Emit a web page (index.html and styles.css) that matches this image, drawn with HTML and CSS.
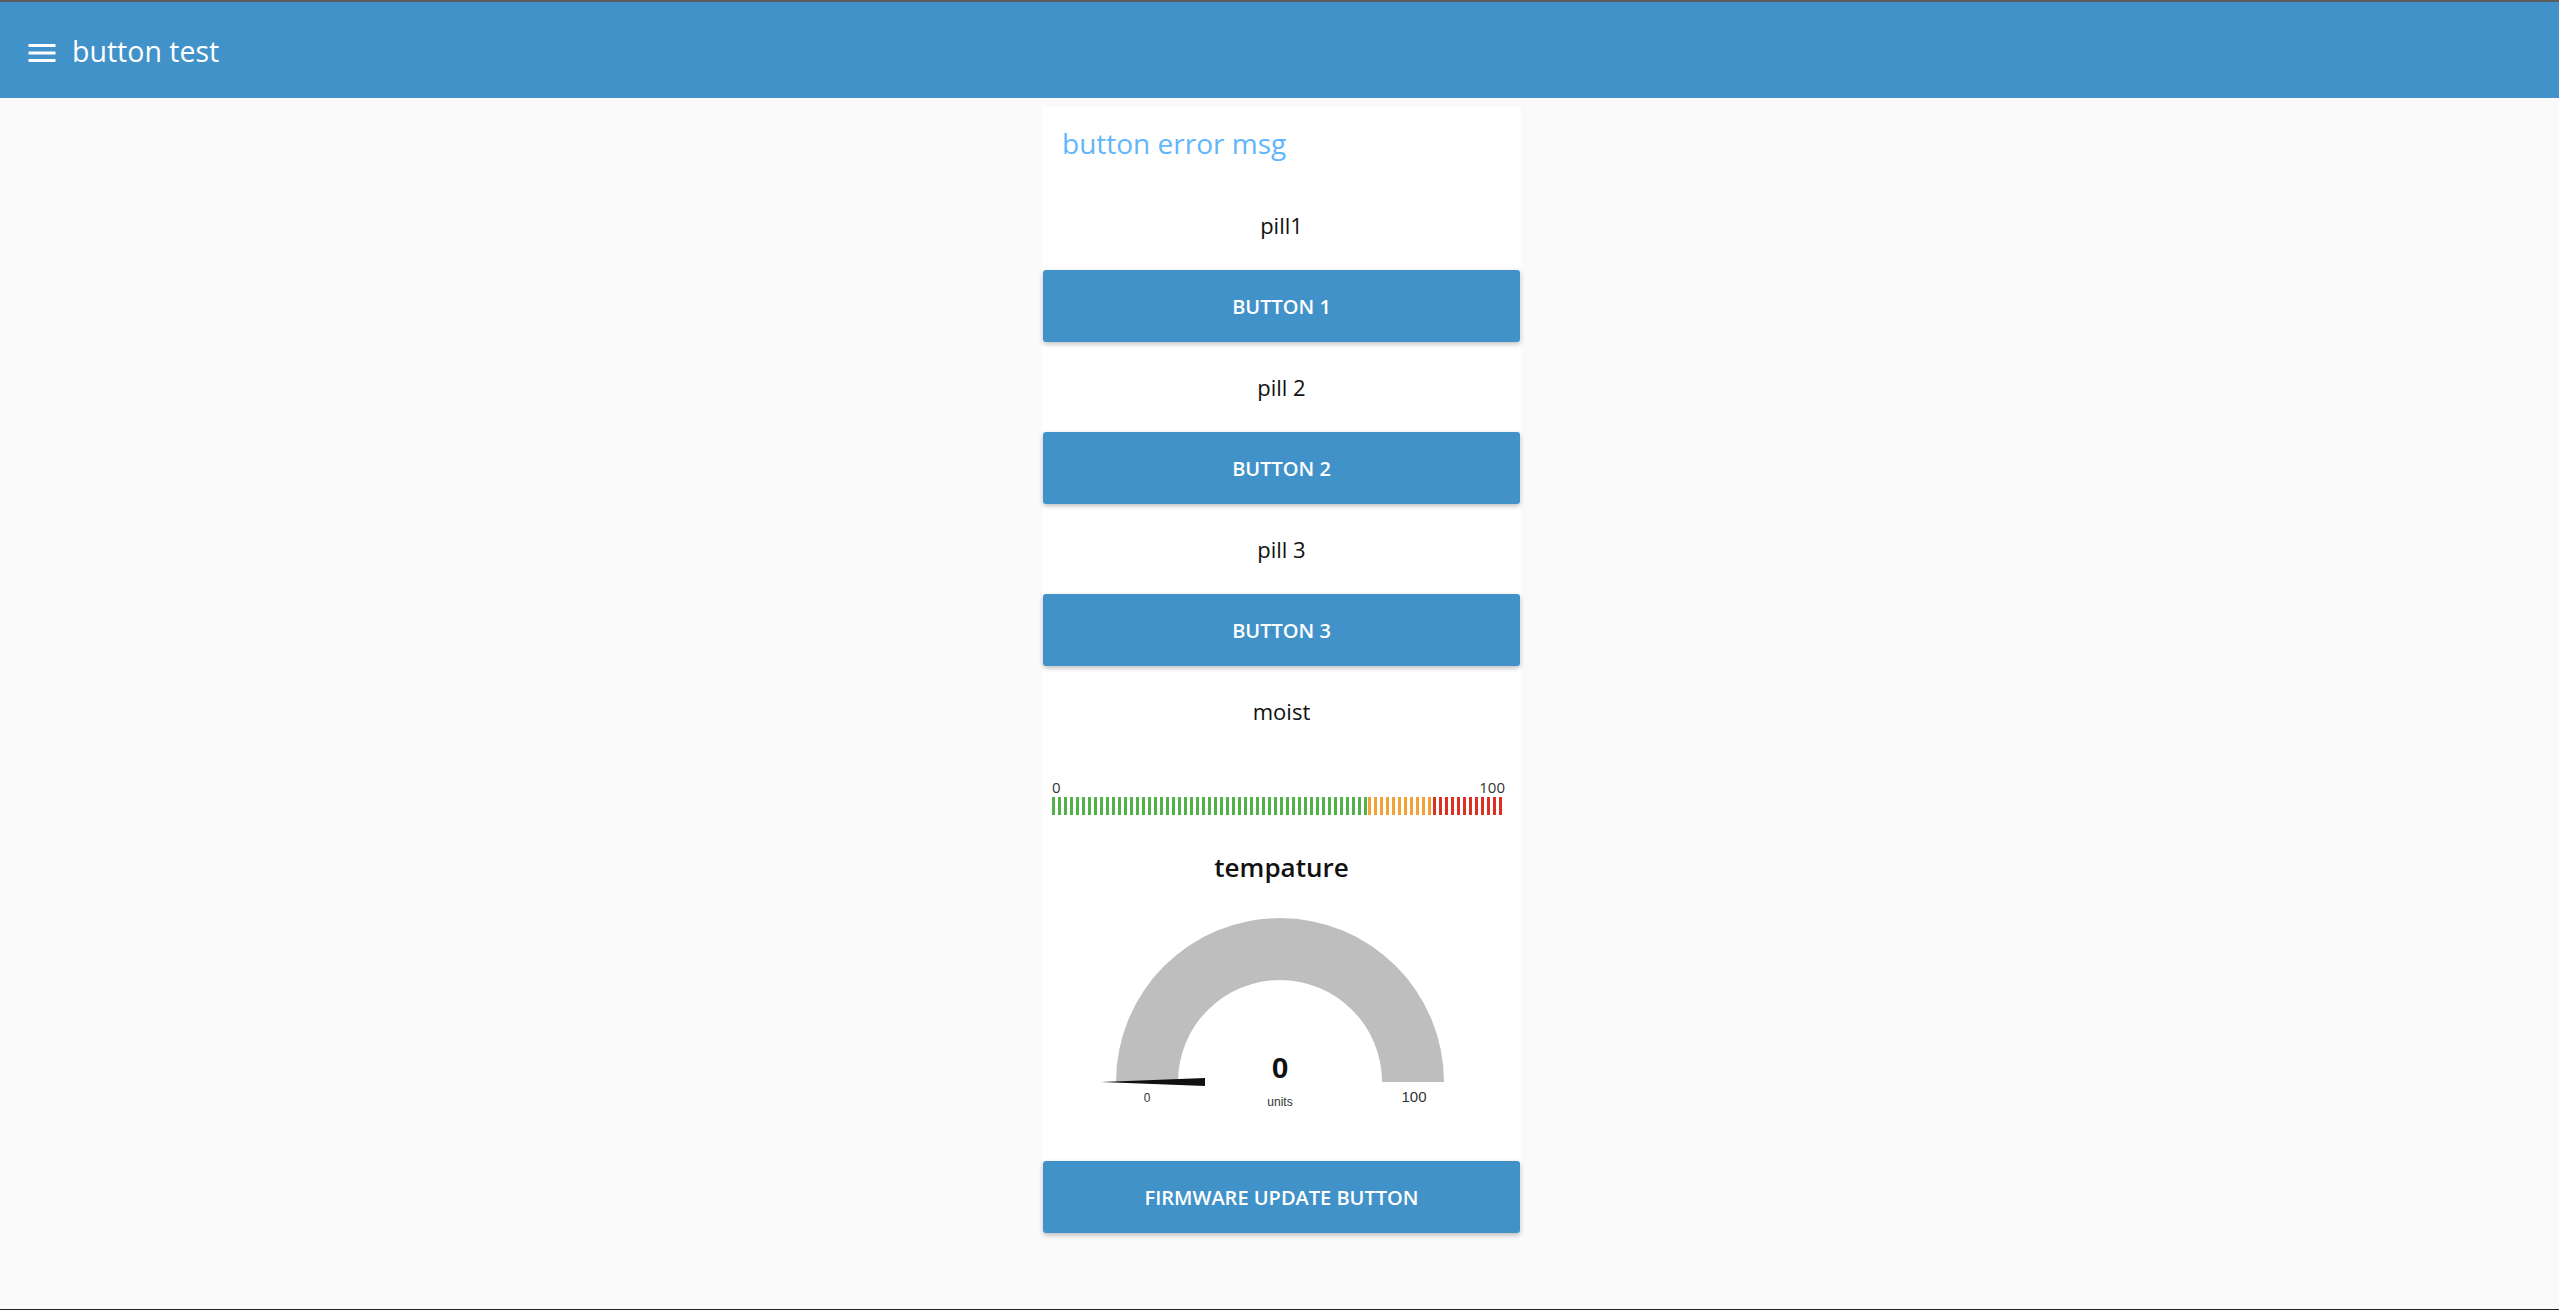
FILE: index.html
```html
<!DOCTYPE html>
<html lang="en">
<head>
<meta charset="utf-8">
<title>button test</title>
<link rel="stylesheet" href="styles.css">
</head>
<body>
<div class="window">
  <header class="toolbar">
    <svg class="menu-icon" viewBox="0 0 24 24" width="36" height="36" aria-hidden="true">
      <path d="M3 18h18v-2H3v2zm0-5h18v-2H3v2zm0-7v2h18V6H3z" fill="#ffffff"/>
    </svg>
    <h1 class="app-title">button test</h1>
  </header>
  <main class="content">
    <section class="card">
      <h2 class="card-title">button error msg</h2>
      <div class="text-row">pill1</div>
      <button class="btn">BUTTON 1</button>
      <div class="text-row">pill 2</div>
      <button class="btn">BUTTON 2</button>
      <div class="text-row">pill 3</div>
      <button class="btn">BUTTON 3</button>
      <div class="level">
        <div class="text-row">moist</div>
        <div class="level-bar">
          <div class="level-labels"><span>0</span><span>100</span></div>
          <div class="ticks">
            <div class="seg seg-green"></div>
            <div class="seg seg-orange"></div>
            <div class="seg seg-red"></div>
          </div>
        </div>
      </div>
      <div class="gauge">
        <div class="gauge-title">tempature</div>
        <svg class="gauge-svg" width="479" height="255" viewBox="0 0 479 255">
          <path d="M74 185 A164 164 0 0 1 402 185 L340 185 A102 102 0 0 0 136 185 Z" fill="#bebebe"/>
          <polygon points="59,185 163,181 163,189" fill="#111111"/>
          <text class="g-value" x="238" y="181" text-anchor="middle">0</text>
          <text class="g-units" x="238" y="209" text-anchor="middle">units</text>
          <text class="g-min" x="105" y="205" text-anchor="middle">0</text>
          <text class="g-max" x="372" y="205" text-anchor="middle">100</text>
        </svg>
      </div>
      <button class="btn">FIRMWARE UPDATE BUTTON</button>
    </section>
  </main>
</div>
</body>
</html>
```

FILE: styles.css
```css
html, body {
  margin: 0;
  padding: 0;
}

body {
  background: #fafafa;
  font-family: "Open Sans", "Noto Sans", sans-serif;
  color: #111111;
}

.window {
  height: 1310px;
  box-sizing: border-box;
  border-top: 2px solid #5b5b5b;
  border-bottom: 1px solid #222222;
  display: flex;
  flex-direction: column;
  overflow: hidden;
}

.toolbar {
  height: 96px;
  flex: 0 0 96px;
  box-sizing: border-box;
  background: #4192c9;
  display: flex;
  align-items: center;
  padding: 6px 0 0 24px;
  gap: 12px;
}

.menu-icon {
  display: block;
  flex: 0 0 36px;
}

.app-title {
  margin: -4px 0 0 0;
  font-size: 28.5px;
  font-weight: 400;
  line-height: 28px;
  color: #ffffff;
}

.content {
  flex: 1;
  display: flex;
  justify-content: center;
  align-items: flex-start;
  padding: 9px 0 0 4px;
}

.card {
  width: 479px;
  background: #ffffff;
  display: flex;
  flex-direction: column;
  gap: 9px;
}

.card-title {
  margin: 0;
  height: 73px;
  box-sizing: border-box;
  padding: 22px 0 0 20px;
  font-size: 28px;
  line-height: 28px;
  font-weight: 400;
  color: #61b6fb;
}

.text-row {
  height: 72px;
  line-height: 72px;
  text-align: center;
  font-size: 22px;
  color: #111111;
}

.btn {
  display: block;
  margin: 0 1px;
  height: 72px;
  border: none;
  border-radius: 3px;
  background: #4192c9;
  color: #ffffff;
  font-family: "Open Sans", "Noto Sans", sans-serif;
  font-size: 20px;
  font-weight: 600;
  box-shadow: 0 2px 5px 0 rgba(0, 0, 0, 0.26);
  padding: 0;
}

.level {
  height: 153px;
}

.level-bar {
  margin: 31px 16px 0 10px;
}

.level-labels {
  display: flex;
  justify-content: space-between;
  height: 18px;
  font-size: 15px;
  line-height: 18px;
  color: #333333;
}

.ticks {
  margin-top: 1px;
  display: flex;
  height: 18px;
}

.seg {
  height: 18px;
}

.seg-green {
  width: 318px;
  background: repeating-linear-gradient(90deg, #52b24a 0 3px, transparent 3px 6px);
}

.seg-orange {
  width: 66px;
  background: repeating-linear-gradient(90deg, #f4a135 0 3px, transparent 3px 6px);
}

.seg-red {
  width: 72px;
  background: repeating-linear-gradient(90deg, #db3124 0 3px, transparent 3px 6px);
}

.gauge {
  height: 315px;
  display: flex;
  flex-direction: column;
}

.gauge-title {
  height: 60px;
  line-height: 60px;
  text-align: center;
  font-size: 26px;
  font-weight: 600;
  color: #111111;
}

.gauge-svg {
  display: block;
}

.g-value {
  font-family: "Liberation Sans", Arial, sans-serif;
  font-size: 30px;
  font-weight: 700;
  fill: #111111;
}

.g-units {
  font-family: "Liberation Sans", Arial, sans-serif;
  font-size: 12px;
  fill: #333333;
}

.g-min {
  font-family: "Liberation Sans", Arial, sans-serif;
  font-size: 12px;
  fill: #333333;
}

.g-max {
  font-family: "Liberation Sans", Arial, sans-serif;
  font-size: 15px;
  fill: #333333;
}
```
